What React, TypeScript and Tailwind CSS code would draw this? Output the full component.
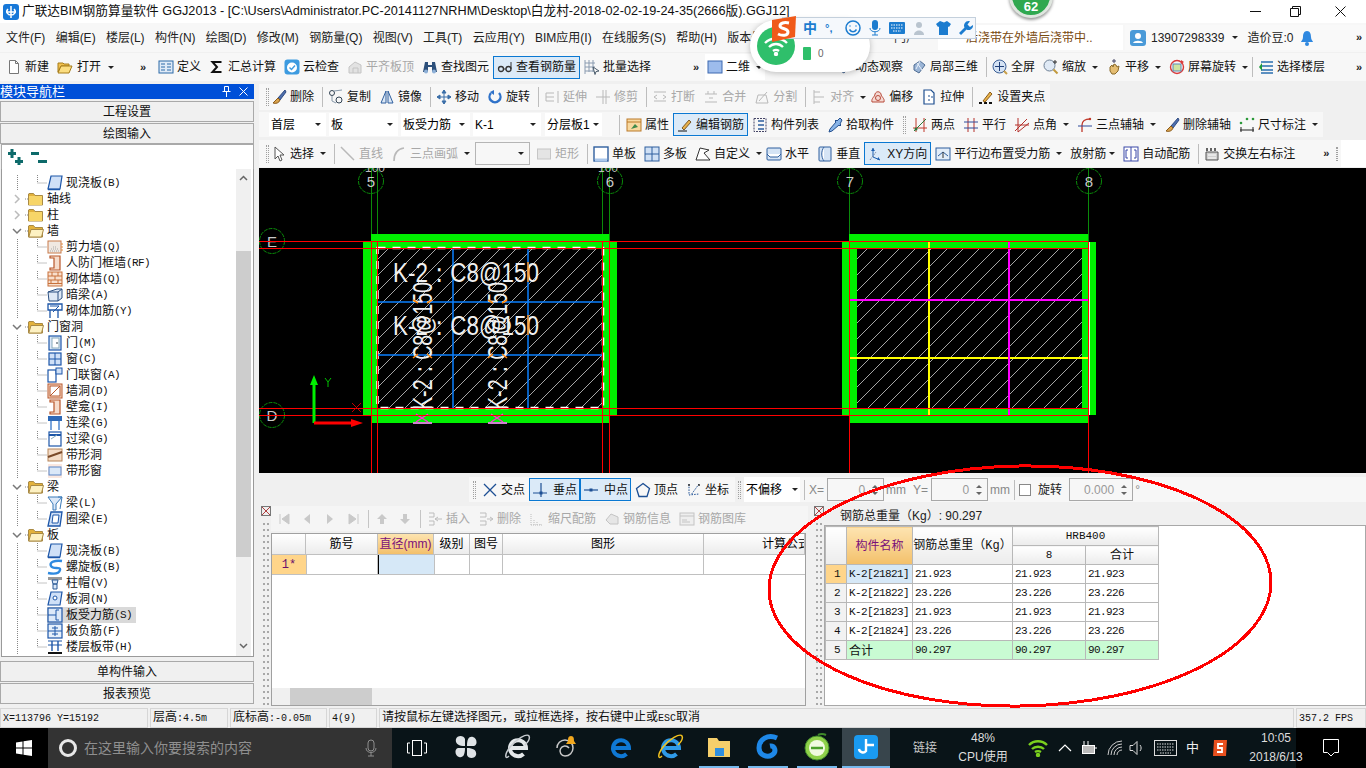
import type { ReactNode } from "react";
import { twMerge } from "tailwind-merge";

const MONO = "[font-family:'Liberation_Mono','Noto_Sans_CJK_SC',monospace]";

// 16x16 icon wrapper
function G({ children, size = 16 }: { children: ReactNode; size?: number }) {
  return (
    <svg width={size} height={size} viewBox="0 0 16 16" fill="none" className="shrink-0">
      {children}
    </svg>
  );
}

const I: Record<string, ReactNode> = {
  page: <G><path d="M3.5 1.5h6l3 3v10h-9z" fill="#fff" stroke="#777" /><path d="M9.5 1.5v3h3" stroke="#777" /></G>,
  open: <G><path d="M1 4h5l1 1h5v2H4L1 13z" fill="#f2c14e" stroke="#a67c1a" /><path d="M4 7h11l-3 7H1z" fill="#fbdd80" stroke="#a67c1a" /></G>,
  define: <G><rect x="1" y="2" width="14" height="12" fill="#dfeaf7" stroke="#2d6aa8" /><path d="M3 5h4M3 8h4M3 11h4M9 5h4M9 8h4M9 11h4" stroke="#2d6aa8" /></G>,
  sum: <G><path d="M12.5 3h-9l4.5 5-4.5 5h9" stroke="#111" strokeWidth="2" /></G>,
  cloud: <G><rect x="0.5" y="0.5" width="15" height="15" rx="3" fill="#3d9be0" /><circle cx="8" cy="8.5" r="5" fill="#fff" /><path d="M5.5 8.5l2 2 3.5-4" stroke="#3d9be0" strokeWidth="1.4" /></G>,
  level: <G><path d="M2 14V8l6-5 6 3v8z" fill="#e2e2e2" stroke="#c4c4c4" /><path d="M6 14V9h5v5" stroke="#c4c4c4" /></G>,
  bino: <G><path d="M3 3h3v3h4V3h3l2 10h-5V8H6v5H1z" fill="#2c4f7a" /><circle cx="4" cy="12.5" r="2" fill="#8fb1d8" /><circle cx="12" cy="12.5" r="2" fill="#8fb1d8" /></G>,
  glasses: <G><circle cx="4" cy="10" r="2.5" stroke="#333" strokeWidth="1.3" /><circle cx="11.5" cy="10" r="2.5" stroke="#333" strokeWidth="1.3" /><path d="M6.5 10h2.5M14 10V3" stroke="#333" /></G>,
  batch: <G><path d="M1 1v14M1 4h10M1 8h10M1 12h10M5 1v12M9 1v12" stroke="#8a9bb0" /><path d="M9 8l6 4-3 .5-1 3z" fill="#fff" stroke="#4a5a6a" /></G>,
  plan: <G><rect x="1" y="2" width="14" height="12" fill="#9dbcec" stroke="#3c68b0" /></G>,
  orbit: <G><path d="M3 6l6-4 5 4-6 8-5-3z" fill="#9bb5d6" stroke="#4e6c93" /><path d="M6 4l5 7M9 2L5 10" stroke="#e8f0fa" /></G>,
  fullscreen: <G><circle cx="7.5" cy="7.5" r="6.5" fill="#d4e2f4" stroke="#3b5f96" /><path d="M7.5 3v9M3 7.5h9" stroke="#1f3f78" /><path d="M12 12l3 3" stroke="#c9a04a" strokeWidth="2" /></G>,
  zoom: <G><circle cx="6.5" cy="6.5" r="5.5" fill="#dfe9f5" stroke="#6d7f94" /><path d="M10.5 10.5l4 4" stroke="#c29a3e" strokeWidth="2" /><path d="M12 1v4M10 3h4" stroke="#333" /></G>,
  hand: <G><path d="M4 8l2-2 1 2 1-3 2 1 1 2 2-1-1 5-3 3H6l-2-3z" fill="#e4bd72" stroke="#8a6a2a" /><path d="M8 0v4M6 2h4" stroke="#446" /></G>,
  rotate: <G><circle cx="8" cy="8" r="6.5" stroke="#d93a3a" strokeWidth="1.4" /><rect x="4" y="5" width="8" height="7" fill="#cfe3a0" stroke="#5b8ab8" /><path d="M12 1l3 2-3 2" fill="#d93a3a" /></G>,
  floors: <G><path d="M3 3h12M3 7h12M3 11h12M3 14h12" stroke="#2a6fb0" strokeWidth="1.6" /><path d="M1 8l3-4v8z" fill="#1e9a3c" /></G>,
  brush: <G><path d="M14 1L7 9l2 2 6-8z" fill="#4d6fae" stroke="#2f4a80" /><path d="M7 9l-5 5c3 1 6 0 7-3z" fill="#d9a34d" stroke="#8a5a1a" /></G>,
  copy: <G><circle cx="4" cy="4" r="2.5" stroke="#345" /><circle cx="11" cy="11" r="3" stroke="#345" /><path d="M6 2l8-1M4 7v5l4 2" stroke="#89a" /></G>,
  mirror: <G><path d="M7 2v12H2zM9 2v12h5z" fill="#dce8f6" stroke="#2f5f9e" /></G>,
  move: <G><path d="M8 1v14M1 8h14M8 1L6 4h4zM8 15l-2-3h4zM1 8l3-2v4zM15 8l-3-2v4z" fill="#3a6ea8" stroke="#3a6ea8" /></G>,
  spin: <G><path d="M12 4a5.5 5.5 0 1 1-8 0" stroke="#2f72c9" strokeWidth="2.4" /><path d="M7 1v5L3 3z" fill="#2f72c9" /></G>,
  off1: <G><path d="M14 2v12M10 4H2v8h8M2 8h8" stroke="#b9b9b9" /></G>,
  off2: <G><path d="M8 1v14M11 1v14M1 8h14" stroke="#b9b9b9" /></G>,
  off3: <G><path d="M2 3h12M2 12h12M5 6l-3 2 3 2M11 6l3 2-3 2" stroke="#b9b9b9" /></G>,
  off4: <G><path d="M2 5h12M2 13h12M5 2v3M11 2v3M6 9h4" stroke="#b9b9b9" /></G>,
  off5: <G><path d="M2 14h12L12 6H4z" stroke="#b9b9b9" /><path d="M5 12l8-9" stroke="#b9b9b9" /></G>,
  off6: <G><path d="M3 1v14M3 3h6M3 8h10M3 13h6" stroke="#b9b9b9" /></G>,
  offset: <G><path d="M2 13c-1-4 3-5 3-8 1-3 5-3 6 0 0 3 4 4 3 8z" fill="#f4d9d3" stroke="#b84a3a" /><circle cx="8" cy="9" r="2.5" stroke="#b84a3a" /></G>,
  stretch: <G><path d="M3 1h7l3 3v11H3z" fill="#fff" stroke="#1e4f8f" strokeWidth="1.2" /><path d="M8 6v2M8 10v2M10 8h2" stroke="#1e4f8f" /></G>,
  grip: <G><path d="M1 14h3M6 14h3M11 14h3" stroke="#111" strokeWidth="2" /><path d="M5 12l7-9 2 2-7 8z" fill="#eab54a" stroke="#8a5a1a" /></G>,
  attr: <G><rect x="1" y="2" width="14" height="12" fill="#f8d9a0" stroke="#bb7a2a" /><path d="M1 5h14" stroke="#bb7a2a" /><path d="M5 12l4-5 3 3z" fill="#3f8a4a" /></G>,
  pen: <G><path d="M1 14h9" stroke="#111" /><path d="M5 11l7-8 2 2-7 8z" fill="#e8b04a" stroke="#7a5a2a" /></G>,
  list: <G><path d="M2 1.5h12v13H2z" stroke="#446" strokeDasharray="2 1" /><path d="M6 4h6M6 8h6M6 12h6" stroke="#2f5f9e" strokeWidth="1.4" /></G>,
  pick: <G><path d="M15 3l-2-2-3 3-1-1-1 1 1 1-6 7-1 3 3-1 7-6 1 1 1-1-1-1z" fill="#8ab5e8" stroke="#24508f" /></G>,
  two: <G><path d="M4 1v14M12 1v14M1 11h14" stroke="#c0392b" /><path d="M2 14L14 2" stroke="#2c7a3a" /><circle cx="4" cy="12" r="1.5" fill="#2c7a3a" /></G>,
  para: <G><path d="M5 1v14M11 1v14" stroke="#b5302b" /><path d="M1 5h14M1 11h14" stroke="#2f4a9a" /></G>,
  angle: <G><path d="M4 1v14M1 8h14" stroke="#b5302b" /><path d="M1 14L13 2M4 15l11-9" stroke="#b5302b" /></G>,
  arc: <G><path d="M5 15V8c0-4 3-6 8-6" stroke="#c0392b" strokeWidth="1.3" /><path d="M1 9h14" stroke="#2f4a9a" /><circle cx="13" cy="2" r="1.2" fill="#c0392b" /></G>,
  dim: <G><path d="M1 13h14M2 10v5M14 10v5" stroke="#222" /><circle cx="2" cy="6" r="1.3" fill="#2c9a3a" /><circle cx="8" cy="2" r="1.3" fill="#2c9a3a" /><circle cx="14" cy="2" r="1.3" fill="#2c9a3a" /></G>,
  cursor: <G><path d="M4 1v12l3-3 2 5 2-1-2-5h4z" fill="#fff" stroke="#555" /></G>,
  line: <G><path d="M1 1l13 13" stroke="#b9b9b9" strokeWidth="1.5" /></G>,
  arc3: <G><path d="M3 15C3 8 6 3 13 2" stroke="#b9b9b9" strokeWidth="1.6" /></G>,
  rect: <G><rect x="1.5" y="3" width="13" height="10" fill="#e4e4e4" stroke="#c6c6c6" /></G>,
  single: <G><rect x="1" y="1" width="14" height="14" fill="#fff" stroke="#2f5f9e" strokeWidth="1.4" /><path d="M2 14h12" stroke="#a9c6ea" strokeWidth="3" /></G>,
  multi: <G><rect x="1" y="1" width="14" height="14" fill="#cfe0f5" stroke="#2f5f9e" /><path d="M8 1v14M1 8h14" stroke="#2f5f9e" /></G>,
  custom: <G><path d="M5 2l9 2-5 3 6 7H1z" fill="#fff" stroke="#333" /></G>,
  horiz: <G><rect x="1" y="2" width="14" height="12" rx="1" fill="#d5e4f5" stroke="#2f5f9e" /><path d="M1 8l3 3h8l3-3" fill="#fff" stroke="#2f5f9e" /></G>,
  vert: <G><rect x="2" y="1" width="12" height="14" rx="1" fill="#d5e4f5" stroke="#2f5f9e" /><path d="M7 1C4 5 4 11 7 15" fill="#fff" stroke="#2f5f9e" /></G>,
  xy: <G><path d="M5 2v9l7 3" stroke="#1d5fb0" /><path d="M2 14L8 6" stroke="#7a8aa0" strokeDasharray="2 1" /><path d="M5 2L3 5h4zM12 14l-3-.5 1.5-2.5z" fill="#1d5fb0" /></G>,
  pbar: <G><rect x="1" y="2" width="14" height="12" fill="#e3edf9" stroke="#2f5f9e" /><path d="M3 10l5-4 5 4" stroke="#2f5f9e" /><path d="M8 6v6" stroke="#333" /></G>,
  auto: <G><rect x="1" y="1" width="14" height="14" fill="#fff" stroke="#3a49a8" /><path d="M8 1v14M5 4h-2v8h2M11 4h2v8h-2" stroke="#3a49a8" /></G>,
  swap: <G><path d="M2 6h12v8H2z" fill="#cfcfcf" stroke="#555" /><path d="M3 2v3M7 2v3M11 2v3" stroke="#333" strokeWidth="1.5" /><path d="M4 9h8M4 12h8" stroke="#fff" /></G>,
  cross: <G><path d="M2 2l12 12M14 2L2 14" stroke="#1d4f94" strokeWidth="1.3" /></G>,
  perp: <G><path d="M1 11h14M9 1v14" stroke="#1d4f94" strokeWidth="1.2" /><rect x="7.5" y="9.5" width="3" height="3" fill="#1d4f94" /></G>,
  mid: <G><path d="M1 8h14" stroke="#1d4f94" strokeWidth="1.2" /><rect x="6.5" y="6.5" width="3" height="3" fill="#1d4f94" /></G>,
  vertex: <G><path d="M8 1.5l6.5 5-2.5 8H4l-2.5-8z" stroke="#1d4f94" strokeWidth="1.3" /></G>,
  coord: <G><path d="M3 2v11l10-1M13 2L5 13" stroke="#1d4f94" strokeDasharray="1.5 1.2" /><circle cx="3" cy="3" r="1" fill="#333" /><circle cx="13" cy="3" r="1" fill="#333" /></G>,
  first: <G><path d="M4 3v10M13 3L6 8l7 5z" fill="#c9c9c9" stroke="#c9c9c9" /></G>,
  prev: <G><path d="M11 3L5 8l6 5z" fill="#c9c9c9" /></G>,
  next: <G><path d="M5 3l6 5-6 5z" fill="#c9c9c9" /></G>,
  last: <G><path d="M12 3v10M3 3l7 5-7 5z" fill="#c9c9c9" stroke="#c9c9c9" /></G>,
  up: <G><path d="M8 3l5 5h-3v5H6V8H3z" fill="#c9c9c9" /></G>,
  down: <G><path d="M8 13l5-5h-3V3H6v5H3z" fill="#c9c9c9" /></G>,
  ins: <G><path d="M2 2h5v4H2M2 10h5v4H2M8 8h7M11 6l-3 2 3 2" stroke="#bdbdbd" /></G>,
  del: <G><path d="M2 2h6v4H2M2 10h6v4H2M9 8h5M12 6l3 2-3 2" stroke="#bdbdbd" /></G>,
  scale: <G><path d="M2 14h12M2 14V2M5 14V8M8 14v-4M11 14v-2" stroke="#bdbdbd" strokeDasharray="1 1" /></G>,
  info: <G><path d="M2 9l5-6 7 3v7H6z" fill="#e6e6e6" stroke="#c4c4c4" /></G>,
  lib: <G><rect x="1" y="2" width="14" height="12" fill="#eee" stroke="#c4c4c4" /><path d="M1 5h14M3 9h5M3 11h8" stroke="#c4c4c4" /></G>,
};

function Tool({ icon, label, caret, off, on, className = "" }: { icon?: string; label: string; caret?: boolean; off?: boolean; on?: boolean; className?: string }) {
  const base = on
    ? "h-[23px] border border-[#0a78d2] bg-[#dbeaf8] px-[3px]"
    : "h-full px-[4px]";
  return (
    <div className={twMerge("flex shrink-0 items-center gap-[3px] whitespace-nowrap", off ? "text-[#a8a8a8]" : "text-[#111]", base, className)}>
      {icon && I[icon]}
      <span>{label}</span>
      {caret && <Caret />}
    </div>
  );
}

function Caret() {
  return <span className="ml-[3px] h-0 w-0 border-x-[3px] border-t-[3px] border-x-transparent border-t-[#222]" />;
}

function Sep() {
  return <span className="mr-[1px] ml-[4px] h-[20px] w-px shrink-0 bg-[#bdbdbd]" />;
}

function Grip() {
  return <span className="mx-[3px] h-[18px] w-[3px] shrink-0 border-x border-dotted border-[#a0a0a0]" />;
}

function More({ className = "" }: { className?: string }) {
  return <span className={`shrink-0 text-[11px] leading-none font-bold text-[#222] ${className}`}>»</span>;
}

function Drop({ label, className }: { label: string; className: string }) {
  return (
    <div className={`flex h-[23px] shrink-0 items-center justify-between bg-white pr-[5px] pl-[2px] text-[12px] ${className}`}>
      <span className="whitespace-nowrap">{label}</span>
      <Caret />
    </div>
  );
}

function TitleBar() {
  return (
    <div className="flex h-[23px] shrink-0 items-center bg-white text-[12.7px] text-[#111]">
      <svg width="16" height="16" viewBox="0 0 16 16" className="mx-[3px] shrink-0">
        <rect width="16" height="16" rx="3" fill="#1778d8" />
        <path d="M8 2v12M3 8h10M5 5c-3 3 0 6 3 6M11 5c3 3 0 6-3 6" stroke="#fff" strokeWidth="1.5" fill="none" />
      </svg>
      <span className="whitespace-nowrap">广联达BIM钢筋算量软件 GGJ2013 - [C:\Users\Administrator.PC-20141127NRHM\Desktop\白龙村-2018-02-02-19-24-35(2666版).GGJ12]</span>
      <div className="ml-auto flex items-center">
        <span className="h-px w-[11px] bg-[#111]" />
        <svg width="11" height="11" viewBox="0 0 11 11" className="ml-[29px]" fill="none" stroke="#111"><path d="M.5 2.5h8v8h-8zM2.5 2.5v-2h8v8h-2" /></svg>
        <svg width="11" height="11" viewBox="0 0 11 11" className="mr-[20px] ml-[34px]" fill="none" stroke="#111"><path d="M.5.5l10 10M10.5.5l-10 10" /></svg>
      </div>
    </div>
  );
}

const MENU = ["文件(F)", "编辑(E)", "楼层(L)", "构件(N)", "绘图(D)", "修改(M)", "钢筋量(Q)", "视图(V)", "工具(T)", "云应用(Y)", "BIM应用(I)", "在线服务(S)", "帮助(H)", "版本号"];

function MenuBar() {
  return (
    <div className="flex h-[29px] shrink-0 items-center bg-[#f7f7f7] pl-[6px] text-[#222]">
      <div className="flex w-[880px] shrink-0 gap-[10.3px] whitespace-nowrap">
        {MENU.map((m) => <span key={m}>{m}</span>)}
      </div>
      <span className="ml-[8px] w-[44px] shrink-0 text-[#333]">门户</span>
      <div className="flex h-[25px] w-[185px] shrink-0 items-center bg-white pl-[28px] whitespace-nowrap text-[#7a4a10]">后浇带在外墙后浇带中..</div>
      <div className="ml-[2px] flex h-[25px] flex-1 items-center bg-[#f9f9f9] pl-[5px] whitespace-nowrap">
        <svg width="16" height="16" viewBox="0 0 16 16" className="shrink-0"><rect width="16" height="16" rx="3" fill="#4a9ad8" /><circle cx="8" cy="6" r="3" fill="#fff" /><path d="M3 13c1-3 9-3 10 0z" fill="#fff" /></svg>
        <span className="ml-[5px]">13907298339</span>
        <span className="ml-[5px] flex items-center"><Caret /></span>
        <span className="ml-[9px]">造价豆:0</span>
        <svg width="14" height="16" viewBox="0 0 14 16" className="ml-[7px] shrink-0"><path d="M7 1c3 0 4 3 4 6 0 3 2 4 2 5H1c0-1 2-2 2-5 0-3 1-6 4-6z" fill="#2f88e0" /><circle cx="7" cy="14" r="2" fill="#2f88e0" /></svg>
        <More className="mr-[4px] ml-auto" />
      </div>
    </div>
  );
}

function Toolbar1() {
  return (
    <div className="flex h-[30px] shrink-0 items-center bg-[#f0f0f0] text-[12px]">
      <div className="flex h-[28px] w-[152px] shrink-0 items-center bg-[#f7f7f7] pl-[2px]">
        <Tool icon="page" label="新建" />
        <Tool icon="open" label="打开" caret className="gap-[4px]" />
        <More className="mr-[6px] ml-auto" />
      </div>
      <div className="flex h-[28px] w-[549px] shrink-0 items-center bg-[#f7f7f7] pl-[2px]">
        <Tool icon="define" label="定义" />
        <Tool icon="sum" label="汇总计算" />
        <Tool icon="cloud" label="云检查" />
        <Tool icon="level" label="平齐板顶" off />
        <Tool icon="bino" label="查找图元" />
        <Tool icon="glasses" label="查看钢筋量" on />
        <Tool icon="batch" label="批量选择" />
        <More className="mr-[2px] ml-auto" />
      </div>
      <div className="flex h-[28px] flex-1 items-center bg-[#f7f7f7] pl-[4px]">
        <div className="flex h-[26px] w-[60px] shrink-0 items-center bg-white">
          <Tool icon="plan" label="二维" caret className="px-[2px]" />
        </div>
        <div className="w-[67px] shrink-0" />
        <Tool icon="orbit" label="动态观察" />
        <Tool icon="orbit" label="局部三维" />
        <Sep />
        <Tool icon="fullscreen" label="全屏" />
        <Tool icon="zoom" label="缩放" caret />
        <Tool icon="hand" label="平移" caret />
        <Tool icon="rotate" label="屏幕旋转" caret className="pr-0" />
        <Sep />
        <Tool icon="floors" label="选择楼层" />
        <More className="mr-[4px] ml-auto" />
      </div>
    </div>
  );
}

type Leaf = { kind: "folder" | "open" | "item"; name: string; code?: string; icon?: string; sel?: boolean };

const TREE: Leaf[] = [
  { kind: "item", name: "现浇板", code: "(B)", icon: "slab" },
  { kind: "folder", name: "轴线" },
  { kind: "folder", name: "柱" },
  { kind: "open", name: "墙" },
  { kind: "item", name: "剪力墙", code: "(Q)", icon: "shear" },
  { kind: "item", name: "人防门框墙", code: "(RF)", icon: "jamb" },
  { kind: "item", name: "砌体墙", code: "(Q)", icon: "brick" },
  { kind: "item", name: "暗梁", code: "(A)", icon: "beam" },
  { kind: "item", name: "砌体加筋", code: "(Y)", icon: "tie" },
  { kind: "open", name: "门窗洞" },
  { kind: "item", name: "门", code: "(M)", icon: "door" },
  { kind: "item", name: "窗", code: "(C)", icon: "window" },
  { kind: "item", name: "门联窗", code: "(A)", icon: "doorwin" },
  { kind: "item", name: "墙洞", code: "(D)", icon: "hole" },
  { kind: "item", name: "壁龛", code: "(I)", icon: "jamb" },
  { kind: "item", name: "连梁", code: "(G)", icon: "link" },
  { kind: "item", name: "过梁", code: "(G)", icon: "lintel" },
  { kind: "item", name: "带形洞", icon: "strip" },
  { kind: "item", name: "带形窗", icon: "stripwin" },
  { kind: "open", name: "梁" },
  { kind: "item", name: "梁", code: "(L)", icon: "girder" },
  { kind: "item", name: "圈梁", code: "(E)", icon: "ring" },
  { kind: "open", name: "板" },
  { kind: "item", name: "现浇板", code: "(B)", icon: "slab" },
  { kind: "item", name: "螺旋板", code: "(B)", icon: "spiral" },
  { kind: "item", name: "柱帽", code: "(V)", icon: "cap" },
  { kind: "item", name: "板洞", code: "(N)", icon: "slabhole" },
  { kind: "item", name: "板受力筋", code: "(S)", icon: "rebar", sel: true },
  { kind: "item", name: "板负筋", code: "(F)", icon: "neg" },
  { kind: "item", name: "楼层板带", code: "(H)", icon: "band" },
];

const TI: Record<string, ReactNode> = {
  slab: <G><path d="M4 1h11l-2 13H1z" fill="#cfe0f7" stroke="#1d56a8" strokeWidth="1.2" /><path d="M1 14.500h12" stroke="#1d56a8" strokeWidth="1.5" /></G>,
  shear: <G><rect x="1" y="2" width="13" height="12" fill="#f0e8e2" stroke="#c87a4a" /><path d="M3 12h9M4 10h7M6 8h4" stroke="#aaa" strokeDasharray="1 1" /><path d="M14 5h2M14 8h2M14 11h2" stroke="#e08a3a" /></G>,
  jamb: <G><path d="M3 1h10v14H3v-2h4V3H3z" fill="#f6dccb" stroke="#b8562a" strokeWidth="1.2" /></G>,
  brick: <G><rect x="1" y="1" width="14" height="14" fill="#f8dfcd" stroke="#c8703a" /><path d="M1 5h14M1 9h14M1 12.500h14M5 1v4M11 1v4M8 5v4M4 9v4M11 9v4" stroke="#c8703a" /></G>,
  beam: <G><path d="M1 5l9-3h5v9l-4 3H2z" fill="#dfe9f5" stroke="#2b4f80" /><path d="M1 5h10v9M11 5l4-3" stroke="#2b4f80" /></G>,
  tie: <G><path d="M1 1h14v6H1zM3 7v8M11 7v8" stroke="#1d56a8" strokeWidth="1.3" /><path d="M3 3h9l-6 6" stroke="#1d56a8" /></G>,
  door: <G><rect x="2" y="1" width="12" height="14" fill="#dbe8f8" stroke="#1d56a8" strokeWidth="1.2" /><rect x="5" y="3" width="7" height="10" fill="#fff" stroke="#8ab" /><circle cx="10" cy="8" r="0.8" fill="#123" /></G>,
  window: <G><rect x="2" y="2" width="12" height="12" fill="#cfe0f7" stroke="#1d56a8" strokeWidth="1.2" /><path d="M8 2v12M2 8h12" stroke="#1d56a8" /></G>,
  doorwin: <G><rect x="1" y="3" width="8" height="12" fill="#fff" stroke="#1d56a8" strokeWidth="1.2" /><rect x="9" y="1" width="6" height="6" fill="#cfe0f7" stroke="#1d56a8" /></G>,
  hole: <G><rect x="1" y="1" width="14" height="14" fill="#f8dfcd" stroke="#b8562a" /><rect x="3" y="3" width="10" height="10" fill="#fff" stroke="#b8562a" /><path d="M3 13L13 3" stroke="#b8562a" /></G>,
  link: <G><rect x="1" y="1" width="14" height="5" fill="#2f6ab8" /><path d="M4 6v9M12 6v9" stroke="#7aa5dc" strokeWidth="2" /></G>,
  lintel: <G><rect x="2" y="1" width="12" height="14" fill="#fff" stroke="#1d56a8" strokeWidth="1.2" /><path d="M2 4h12" stroke="#1d56a8" strokeWidth="2" /><path d="M4 8l6-4" stroke="#8ab" /></G>,
  strip: <G><rect x="1" y="2" width="14" height="12" fill="#f3dcc8" stroke="#b8865a" /><path d="M1 10l14-5" stroke="#7a4a2a" strokeWidth="2" /></G>,
  stripwin: <G><path d="M1 1h14v14H1z" fill="#fbe8e0" /><rect x="2" y="4" width="12" height="8" fill="#dbe8f8" stroke="#5b86c8" /></G>,
  girder: <G><path d="M1 2h14L9 9v6H6V9z" fill="#dbe8f8" stroke="#3a7ab8" /><path d="M11 2l4 0-2 12" stroke="#3a7ab8" /></G>,
  ring: <G><path d="M4 1h11l-2 14H1z" fill="#cfe0f7" stroke="#1d56a8" strokeWidth="1.3" /><path d="M6 4h6l-1 8H5z" fill="#fff" stroke="#1d56a8" /></G>,
  spiral: <G size={16}><path d="M15 2C8 1 2 3 4 7s10 0 9 4-7 4-12 3" stroke="#2f8ae0" strokeWidth="2.4" /></G>,
  cap: <G><path d="M1 2h14v3H1z" fill="#999" /><path d="M5 5h6l-1 4H6zM6 9h4v5H6z" fill="#dbe8f8" stroke="#2b5a96" /></G>,
  slabhole: <G><path d="M4 1h11l-2 13H1z" fill="#cfe0f7" stroke="#1d56a8" strokeWidth="1.2" /><circle cx="8" cy="7" r="2" fill="#fff" stroke="#1d56a8" /></G>,
  rebar: <G><rect x="1" y="1" width="14" height="14" fill="#dbe8f8" stroke="#1d56a8" strokeWidth="1.2" /><path d="M1 8h8M9 3v10M9 3h3M9 13h3" stroke="#1d56a8" /></G>,
  neg: <G><rect x="1" y="1" width="14" height="14" fill="#e6f0fb" stroke="#1d56a8" strokeWidth="1.2" /><path d="M1 8h14M8 3v10M5 5h6M5 11h6" stroke="#1d56a8" /></G>,
  band: <G><path d="M1 2h14M1 6h14" stroke="#1d56a8" /><path d="M5 2v10M11 2v10" stroke="#1d56a8" strokeWidth="1.4" /><path d="M1 14h14" stroke="#111" strokeWidth="2" /></G>,
};

function Folder({ open }: { open: boolean }) {
  return (
    <svg width="16" height="14" viewBox="0 0 16 14" className="shrink-0">
      <path d="M.5 2V13h14V3.500H7L5.500 1.500H1z" fill="#e3b23c" stroke="#a98a45" />
      {open ? <path d="M3 5.500h12.500L13.500 13H.8z" fill="#fdf1c2" stroke="#a98a45" /> : <rect x="1" y="4" width="13" height="9" fill="#f7d568" />}
    </svg>
  );
}

function TreeRow({ leaf }: { leaf: Leaf }) {
  const isItem = leaf.kind === "item";
  return (
    <div className="flex h-[16px] shrink-0 items-center">
      {isItem ? (
        <svg width="43" height="16" className="ml-[2px] shrink-0">
          <path d="M13.500 0v16M33.500 0v8M33.500 8h9" stroke="#888" strokeDasharray="1 1" fill="none" />
        </svg>
      ) : (
        <svg width="24" height="16" className="ml-[2px] shrink-0" fill="none">
          {leaf.kind === "open" ? <path d="M9 6l4 4 4-4" stroke="#777" strokeWidth="1.5" /> : <path d="M11 4l4 4-4 4" stroke="#bbb" strokeWidth="1.5" />}
          <path d="M21 8h3" stroke="#888" strokeDasharray="1 1" />
        </svg>
      )}
      <div className={`flex h-[16px] items-center pr-[4px] text-[12px] whitespace-nowrap text-[#111] ${leaf.sel ? "bg-[#d9d9d9]" : ""}`}>
        {isItem ? TI[leaf.icon!] : <Folder open={leaf.kind === "open"} />}
        <span className="ml-[3px]">{leaf.name}</span>
        {leaf.code && <span className={`${MONO} text-[11px] tracking-[-0.6px]`}>{leaf.code}</span>}
      </div>
    </div>
  );
}

function NavButton({ label }: { label: string }) {
  return <div className="flex h-[21px] shrink-0 items-center justify-center border border-[#a9a9a9] bg-[#f0f0f0] text-[12px] text-[#111]">{label}</div>;
}

function LeftPanel() {
  return (
    <div className="flex w-[254px] shrink-0 flex-col pt-[2px]">
      <div className="flex h-[15px] shrink-0 items-center bg-[#0050d8] text-[13px] leading-none text-white">
        <span>模块导航栏</span>
        <span className="mr-[6px] ml-auto flex items-center gap-[8px]">
          <svg width="9" height="11" viewBox="0 0 9 11" fill="none" stroke="#fff"><path d="M2.500.5h4v5h-4zM.5 5.500h8M4.500 6v5" /></svg>
          <svg width="9" height="9" viewBox="0 0 9 9" fill="none" stroke="#fff"><path d="M.5.5l8 8M8.500.5l-8 8" /></svg>
        </span>
      </div>
      <div className="mt-[2px] flex flex-col gap-px"><NavButton label="工程设置" /><NavButton label="绘图输入" /></div>
      <div className="ml-[1px] flex h-[25px] shrink-0 items-center gap-[8px] border-x border-t border-[#a9a9a9] bg-white pl-[6px]">
        <svg width="15" height="16" viewBox="0 0 15 16" fill="#0d6a6a"><path d="M0 3h8v3H0zM2.500 0h3v9h-3zM7 11h8v3H7zM9.500 8h3v8h-3z" /></svg>
        <svg width="16" height="16" viewBox="0 0 16 16" fill="#0d6a6a"><path d="M0 3h8v3H0zM7 11h9v3H7z" /></svg>
      </div>
      <div className="ml-[1px] flex h-[488px] shrink-0 overflow-hidden border-x border-b border-[#9a9a9a] bg-white">
        <div className="flex min-w-0 flex-1 flex-col overflow-hidden pt-[6px]">
          {TREE.map((leaf, i) => <TreeRow key={i} leaf={leaf} />)}
          <div className="flex h-[16px] shrink-0 items-center pl-[26px]"><Folder open={false} /><span className="ml-[3px]">基础</span></div>
        </div>
        <div className="mr-[2px] flex w-[15px] shrink-0 flex-col bg-[#f0f0f0]">
          <span className="flex h-[17px] shrink-0 items-center justify-center"><svg width="9" height="6" viewBox="0 0 9 6" fill="none" stroke="#666" strokeWidth="1.5"><path d="M1 5l3.500-3.500L8 5" /></svg></span>
          <span className="mt-[65px] h-[306px] shrink-0 bg-[#cdcdcd]" />
          <span className="mt-auto mb-[2px] flex h-[17px] shrink-0 items-center justify-center"><svg width="9" height="6" viewBox="0 0 9 6" fill="none" stroke="#666" strokeWidth="1.5"><path d="M1 1l3.500 3.500L8 1" /></svg></span>
        </div>
      </div>
      <div className="mt-[4px] flex flex-col gap-px"><NavButton label="单构件输入" /><NavButton label="报表预览" /></div>
    </div>
  );
}

function Row2() {
  return (
    <div className="flex h-[26px] w-[791px] shrink-0 items-center bg-[#f7f7f7] pl-[4px]">
      <Grip />
      <Tool icon="brush" label="删除" className="-ml-[5px]" />
      <Sep />
      <Tool icon="copy" label="复制" />
      <Tool icon="mirror" label="镜像" />
      <Sep />
      <Tool icon="move" label="移动" />
      <Tool icon="spin" label="旋转" />
      <Sep />
      <Tool icon="off1" label="延伸" off />
      <Tool icon="off2" label="修剪" off />
      <Sep />
      <Tool icon="off3" label="打断" off />
      <Tool icon="off4" label="合并" off />
      <Tool icon="off5" label="分割" off />
      <Sep />
      <Tool icon="off6" label="对齐" off caret className="pr-0" />
      <Tool icon="offset" label="偏移" />
      <Tool icon="stretch" label="拉伸" />
      <Sep />
      <Tool icon="grip" label="设置夹点" />
    </div>
  );
}

function Row3() {
  return (
    <div className="mt-[2px] flex h-[25px] shrink-0 items-center">
      <div className="flex h-full w-[641px] shrink-0 items-center bg-[#f7f7f7] pl-[10px]">
        <Drop label="首层" className="w-[57px]" />
        <Drop label="板" className="ml-[3px] w-[69px]" />
        <Drop label="板受力筋" className="ml-[3px] w-[69px]" />
        <Drop label="K-1" className="ml-[3px] w-[68px]" />
        <Drop label="分层板1" className="ml-[4px] w-[57px]" />
        <span className="mr-[2px] ml-[17px] h-[20px] w-px shrink-0 bg-[#bdbdbd]" />
        <Tool icon="attr" label="属性" />
        <Tool icon="pen" label="编辑钢筋" on />
        <Tool icon="list" label="构件列表" />
        <Tool icon="pick" label="拾取构件" />
      </div>
      <div className="flex h-full w-[423px] shrink-0 items-center bg-[#f7f7f7]">
        <Grip />
        <Tool icon="two" label="两点" className="-ml-[1px]" />
        <Tool icon="para" label="平行" />
        <Tool icon="angle" label="点角" caret />
        <Tool icon="arc" label="三点辅轴" caret />
        <Tool icon="brush" label="删除辅轴" />
        <Tool icon="dim" label="尺寸标注" caret />
      </div>
    </div>
  );
}

function Row4() {
  return (
    <div className="mt-[3px] mb-[1px] flex h-[27px] shrink-0 items-center bg-[#f7f7f7] pl-[4px]">
      <Grip />
      <Tool icon="cursor" label="选择" caret className="-ml-[5px]" />
      <Sep />
      <Tool icon="line" label="直线" off />
      <Tool icon="arc3" label="三点画弧" off caret />
      <div className="ml-[1px] flex h-[23px] w-[55px] shrink-0 items-center justify-end border border-[#b5b5b5] pr-[5px]"><Caret /></div>
      <Tool icon="rect" label="矩形" off className="ml-[2px]" />
      <Sep />
      <Tool icon="single" label="单板" />
      <Tool icon="multi" label="多板" />
      <Tool icon="custom" label="自定义" caret className="pr-0" />
      <Tool icon="horiz" label="水平" />
      <Tool icon="vert" label="垂直" />
      <Tool icon="xy" label="XY方向" on />
      <Tool icon="pbar" label="平行边布置受力筋" caret />
      <Tool label="放射筋" caret className="gap-0" />
      <Tool icon="auto" label="自动配筋" />
      <Sep />
      <Tool icon="swap" label="交换左右标注" />
      <More className="ml-[24px]" />
      <span className="ml-[4px]"><Grip /></span>
      <span className="h-full flex-1 bg-white" />
    </div>
  );
}

const HATCH_X = Array.from({ length: 26 }, (_, i) => i);

function Hatch({ x, w }: { x: number; w: number }) {
  // diagonal fill clipped to the slab
  const id = `clip${x}`;
  return (
    <g>
      <clipPath id={id}><rect x={x} y={249} width={w} height={159} /></clipPath>
      <g clipPath={`url(#${id})`} stroke="#cfcfcf" strokeWidth="0.8">
        {HATCH_X.map((i) => <line key={i} x1={x - 165 + i * 16} y1={408} x2={x + 5 + i * 16} y2={238} />)}
      </g>
    </g>
  );
}

function Axis({ cx, cy, label }: { cx: number; cy: number; label: string }) {
  return (
    <g>
      <circle cx={cx} cy={cy} r={12.5} fill="none" stroke="#0a8a0a" strokeDasharray="4 1" />
      <text x={cx} y={cy + 5.500} textAnchor="middle" fontSize="15" fill="#c8c8c8" fontFamily="Liberation Sans">{label}</text>
    </g>
  );
}

function Canvas() {
  const cadText = "K-2：C8@150";
  return (
    <div className="h-[305px] shrink-0 bg-black">
      <svg width="1107" height="305" viewBox="259 168 1107 305" className="block">
        {/* axis stubs */}
        <path d="M371.500 168v74M377.500 168v74M602.500 168v74M609.500 168v74M849.500 168v74M1088.500 168v74" stroke="#0a8a0a" fill="none" shapeRendering="crispEdges" />
        <Axis cx={371} cy={181} label="5" />
        <Axis cx={610} cy={181} label="6" />
        <Axis cx={850} cy={181} label="7" />
        <Axis cx={1089} cy={181} label="8" />
        <Axis cx={272} cy={241} label="E" />
        <Axis cx={272} cy={415} label="D" />
        <text x={365} y={172} fontSize="12" fill="#bbb" fontFamily="Liberation Sans">100</text>
        <text x={598} y={172} fontSize="12" fill="#bbb" fontFamily="Liberation Sans">100</text>

        {/* left slab */}
        <path fillRule="evenodd" d="M371 234h238v8h8v173h-8v8H371v-8h-8V242h8zM378 249v159h225V249z" fill="#00f000" />
        <Hatch x={378} w={225} />
        <rect x={377.500} y={248} width={225.500} height={160} fill="none" stroke="#fff" strokeWidth="2.500" strokeDasharray="8 7" />
        <g stroke="#0a80ff" strokeWidth="1.500">
          <path d="M453 249v159M528 249v159M378 302h225M378 355h225" />
        </g>
        <g fill="#f0f0f0" fontFamily="Liberation Sans" fontSize="27">
          <text x={393} y={282} textLength={146} lengthAdjust="spacingAndGlyphs">{cadText}</text>
          <text x={393} y={335} textLength={146} lengthAdjust="spacingAndGlyphs">{cadText}</text>
          <text transform="translate(432 410) rotate(-90)" textLength={128} lengthAdjust="spacingAndGlyphs">{cadText}</text>
          <text transform="translate(507 410) rotate(-90)" textLength={128} lengthAdjust="spacingAndGlyphs">{cadText}</text>
        </g>
        <path d="M528 262v20M528 315v20M413 300l5 3M427 303l5-3M488 300l5 3M502 303l5-3M413 358l5-4M427 354l5 4M488 358l5-4M502 354l5 4" stroke="#ff8a10" strokeWidth="1.500" fill="none" />
        <path d="M416 414l12 8M428 414l-12 8M491 414l12 8M503 414l-12 8" stroke="#ff30d0" strokeWidth="1.500" />
        <path d="M413 423h19M488 423h19" stroke="#d080d0" strokeWidth="2" />

        {/* right slab */}
        <path fillRule="evenodd" d="M849 234h239v8h8v173h-8v8H849v-8h-7V242h7zM857 249v159h225V249z" fill="#00f000" />
        <rect x={1088} y={242} width={2} height={173} fill="#e8ffe8" />
        <Hatch x={857} w={225} />
        <path d="M929 242v173M850 358h238" stroke="#ffff00" strokeWidth="2" />
        <path d="M1009 242v173M849 300h240" stroke="#ff00ff" strokeWidth="2" />

        {/* red grid */}
        <path d="M259 241.500h829M259 248.500h829M259 408.500h829M259 415.500h829M371.500 242v231M377.500 242v231M602.500 242v231M609.500 242v231M849.500 242v231M1088.500 242v231" stroke="#ff0000" fill="none" shapeRendering="crispEdges" />

        {/* ucs */}
        <path d="M314 423v-40" stroke="#00f000" strokeWidth="3" />
        <path d="M314 375l-4 10h8z" fill="#00f000" />
        <path d="M325 378l3 4 3-4M328 382v5" stroke="#00c000" fill="none" />
        <path d="M314 423h38" stroke="#ff0000" strokeWidth="3" />
        <path d="M363 423l-12-4v8z" fill="#ff0000" />
        <path d="M352 403l9 9M361 403l-9 9" stroke="#c00000" />
      </svg>
    </div>
  );
}

function NumBox({ value, className }: { value: string; className: string }) {
  return (
    <div className={`flex h-[23px] shrink-0 items-center justify-end border border-[#a8a8a8] pr-[5px] text-[#999] ${className}`}>
      <span>{value}</span>
      <span className="ml-[7px] flex flex-col gap-[4px]">
        <span className="h-0 w-0 border-x-[3px] border-b-[3px] border-x-transparent border-b-[#666]" />
        <span className="h-0 w-0 border-x-[3px] border-t-[3px] border-x-transparent border-t-[#666]" />
      </span>
    </div>
  );
}

function SnapBar() {
  return (
    <div className="flex h-[30px] shrink-0 items-center pt-[3px] pl-[210px]">
      <div className="flex h-[25px] shrink-0 items-center bg-[#f7f7f7] pr-[2px] pl-[1px]">
        <Grip />
        <Tool icon="cross" label="交点" className="-ml-[1px]" />
        <Tool icon="perp" label="垂点" on className="gap-[5px] px-[2px]" />
        <Tool icon="mid" label="中点" on className="gap-[5px] px-[2px]" />
        <Tool icon="vertex" label="顶点" />
        <Tool icon="coord" label="坐标" />
      </div>
      <Grip />
      <div className="flex h-[25px] w-[56px] shrink-0 items-center justify-between bg-white pr-[2px] pl-[2px]"><span>不偏移</span><Caret /></div>
      <div className="flex h-[25px] flex-1 items-center bg-[#f7f7f7] whitespace-nowrap text-[#888]">
        <span className="mx-[4px] h-[20px] w-px bg-[#bdbdbd]" />
        <span>X=</span>
        <NumBox value="0" className="ml-[3px] w-[57px]" />
        <span className="ml-[2px]">mm</span>
        <span className="ml-[7px]">Y=</span>
        <NumBox value="0" className="ml-[3px] w-[57px]" />
        <span className="ml-[2px]">mm</span>
        <span className="mx-[4px] h-[20px] w-px bg-[#bdbdbd]" />
        <span className="h-[12px] w-[12px] border border-[#888] bg-white" />
        <span className="ml-[7px] text-[#222]">旋转</span>
        <NumBox value="0.000" className="ml-[7px] w-[64px]" />
        <span className="ml-[2px]">°</span>
      </div>
    </div>
  );
}

function Pin() {
  return (
    <svg width="10" height="10" viewBox="0 0 10 10" className="shrink-0"><rect x=".5" y=".5" width="9" height="9" fill="#eee" stroke="#777" /><path d="M1 1l8 8M9 1L1 9" stroke="#b04040" /></svg>
  );
}

function Strip() {
  return (
    <div className="flex w-[11px] shrink-0 flex-col items-center gap-[5px]">
      <Pin />
      <span className="w-[7px] flex-1 bg-[radial-gradient(#a8a8a8_1px,transparent_1px)] bg-[length:4px_6px]" />
    </div>
  );
}

const HEAD_L = [
  { t: "", w: "w-[34px]" },
  { t: "筋号", w: "w-[72px] justify-center" },
  { t: "直径(mm)", w: "w-[56px] justify-center", on: true },
  { t: "级别", w: "w-[36px] justify-center" },
  { t: "图号", w: "w-[33px] justify-center" },
  { t: "图形", w: "w-[201px] justify-center" },
  { t: "计算公式", w: "flex-1 pl-[58px]" },
];

function RebarPanel() {
  return (
    <div className="flex w-[549px] shrink-0 pt-[3px] pb-[2px] pl-[1px]">
      <Strip />
      <div className="flex min-w-0 flex-1 flex-col">
        <div className="flex h-[25px] shrink-0 items-center bg-[#f5f5f5] pl-[5px] text-[#a0a0a0]">
          <span>{I.first}</span>
          <span className="ml-[7px]">{I.prev}</span>
          <span className="ml-[7px]">{I.next}</span>
          <span className="ml-[8px]">{I.last}</span>
          <span className="mr-[5px] ml-[6px] h-[18px] w-px bg-[#c5c5c5]" />
          <span>{I.up}</span>
          <span className="ml-[7px]">{I.down}</span>
          <span className="mr-[2px] ml-[7px] h-[18px] w-px bg-[#c5c5c5]" />
          <Tool icon="ins" label="插入" off />
          <Tool icon="del" label="删除" off />
          <Tool icon="scale" label="缩尺配筋" off />
          <Tool icon="info" label="钢筋信息" off />
          <Tool icon="lib" label="钢筋图库" off />
        </div>
        <div className="mt-[2px] mr-[2px] flex min-h-0 flex-1 flex-col border border-[#a0a0a0] bg-white">
          <div className="flex h-[21px] shrink-0 border-b border-[#c0c0c0]">
            {HEAD_L.map((h) => (
              <div key={h.t} className={`flex items-center overflow-hidden border-r border-[#c0c0c0] whitespace-nowrap ${h.w} ${h.on ? "bg-gradient-to-b from-[#fde4b0] to-[#f3c06a] text-[#7a0f7a]" : "bg-gradient-to-b from-white to-[#ececec]"}`}>{h.t}</div>
            ))}
          </div>
          <div className="flex h-[20px] shrink-0 border-b border-[#c0c0c0]">
            <div className={`flex w-[34px] items-center justify-center bg-[#ffd58a] text-[#6a0f6a] ${MONO}`}>1*</div>
            <div className="w-[72px] border-x border-[#c0c0c0]" />
            <div className="w-[56px] border-l border-l-black bg-[#d6e8f7]" />
            <div className="w-[36px] border-x border-[#c0c0c0]" />
            <div className="w-[33px] border-r border-[#c0c0c0]" />
            <div className="w-[201px] border-r border-[#c0c0c0]" />
          </div>
          <div className="flex-1" />
          <div className="flex h-[17px] shrink-0 bg-[#f0f0f0] pl-[18px]"><span className="w-[82px] bg-[#cdcdcd]" /></div>
        </div>
      </div>
    </div>
  );
}

const ROWS = [
  ["K-2[21821]", "21.923"],
  ["K-2[21822]", "23.226"],
  ["K-2[21823]", "21.923"],
  ["K-2[21824]", "23.226"],
];

const TD = `border border-[#b8b8b8] h-[19px] p-0 pl-[2px] ${MONO} text-[11px] tracking-[-0.6px] text-[#111]`;
const TH = "border border-[#b8b8b8] bg-gradient-to-b from-white to-[#ececec] p-0 font-normal text-[#111]";

function SumPanel() {
  return (
    <div className="flex flex-1 pt-[3px] pb-[2px] pl-[5px]">
      <Strip />
      <div className="flex min-w-0 flex-1 flex-col">
        <div className="flex h-[19px] shrink-0 items-center pl-[16px] text-[12px] text-[#222]">钢筋总重量（Kg）: 90.297</div>
        <div className="min-h-0 flex-1 border border-[#a8a8a8] bg-white">
          <table className="w-[333px] table-fixed border-collapse text-[12px] leading-none">
            <colgroup>
              <col className="w-[21px]" />
              <col className="w-[66px]" />
              <col className="w-[100px]" />
              <col className="w-[73px]" />
              <col className="w-[73px]" />
            </colgroup>
            <thead>
              <tr className="h-[19px]">
                <th rowSpan={2} className={TH} />
                <th rowSpan={2} className="border border-[#b8b8b8] bg-gradient-to-b from-[#fde4b0] to-[#f3c06a] p-0 font-normal text-[#7a0f7a]">构件名称</th>
                <th rowSpan={2} className={`${TH} whitespace-nowrap`}>钢筋总重里（<span className={MONO}>Kg</span>）</th>
                <th colSpan={2} className={`${TH} ${MONO} text-[11px]`}>HRB400</th>
              </tr>
              <tr className="h-[19px]">
                <th className={`${TH} ${MONO} text-[11px]`}>8</th>
                <th className={TH}>合计</th>
              </tr>
            </thead>
            <tbody>
              {ROWS.map(([name, v], i) => (
                <tr key={name}>
                  <td className={`${TD} text-center ${i === 0 ? "bg-[#ffd58a] text-[#6a0f6a]" : "bg-[#f2f2f2]"}`}>{i + 1}</td>
                  <td className={`${TD} whitespace-nowrap ${i === 0 ? "bg-[#d6e8f7]" : ""}`}>{name}</td>
                  <td className={TD}>{v}</td>
                  <td className={TD}>{v}</td>
                  <td className={TD}>{v}</td>
                </tr>
              ))}
              <tr className="bg-[#c9fbd3]">
                <td className={`${TD} bg-[#f2f2f2] text-center`}>5</td>
                <td className={`${TD} text-[12px] tracking-normal [font-family:'Noto_Sans_CJK_SC',sans-serif]`}>合计</td>
                <td className={TD}>90.297</td>
                <td className={TD}>90.297</td>
                <td className={TD}>90.297</td>
              </tr>
            </tbody>
          </table>
        </div>
      </div>
    </div>
  );
}

function StatusBar() {
  const cell = "flex h-full shrink-0 items-center border border-[#d6d6d6] px-[2px] whitespace-nowrap";
  return (
    <div className={`flex h-[20px] shrink-0 gap-[2px] bg-[#f0f0f0] text-[#111] ${MONO} text-[10px]`}>
      <div className={`${cell} w-[148px]`}>X=113796 Y=15192</div>
      <div className={`${cell} w-[78px]`}><span className="text-[12px]">层高</span>:4.5m</div>
      <div className={`${cell} w-[97px]`}><span className="text-[12px]">底标高</span>:-0.05m</div>
      <div className={`${cell} w-[48px]`}>4(9)</div>
      <div className={`${cell} flex-1 text-[12px]`}>请按鼠标左键选择图元，或拉框选择，按右键中止或<span className="text-[10px]">ESC</span>取消</div>
      <div className={`${cell} w-[70px]`}>357.2 FPS</div>
    </div>
  );
}

function TaskSlot({ children, line, on, className = "" }: { children: ReactNode; line?: boolean; on?: boolean; className?: string }) {
  return (
    <div className={twMerge("flex h-full w-[50px] shrink-0 items-center justify-center border-b-2", line ? "border-b-[#76b9ed]" : "border-b-transparent", on ? "bg-[#38454c]" : "", className)}>
      {children}
    </div>
  );
}

// browser "e" logos, drawn since they are logos and not letters
function ELogo({ color, ring }: { color: string; ring?: string }) {
  return (
    <svg width="28" height="28" viewBox="0 0 28 28" fill="none">
      <path d="M7 15h15a8 8 0 1 0-2.500 6" stroke={color} strokeWidth="4" />
      {ring && <path d="M5 23C1 27 0 22 6 14S23 0 25 3c1 2-1 6-4 9" stroke={ring} strokeWidth="1.500" />}
    </svg>
  );
}

function Taskbar() {
  return (
    <div className="flex h-[40px] shrink-0 bg-[#091418] text-white">
      <div className="flex w-[48px] shrink-0 items-center justify-center bg-black">
        <svg width="16" height="16" viewBox="0 0 16 16" fill="#fff"><path d="M0 2.500l6.500-1v6H0zM7.500 1.300L16 0v7.500H7.500zM0 8.500h6.500v6L0 13.500zM7.500 8.500H16V16l-8.500-1.300z" /></svg>
      </div>
      <div className="flex w-[344px] shrink-0 items-center bg-[#333] pl-[11px]">
        <span className="h-[18px] w-[18px] rounded-full border-[3px] border-[#e8e8e8]" />
        <span className="ml-[7px] text-[14px] text-[#8f8f8f]">在这里输入你要搜索的内容</span>
        <svg width="12" height="18" viewBox="0 0 12 18" fill="none" stroke="#8f8f8f" className="ml-[113px]"><rect x="3" y="1" width="6" height="11" rx="3" /><path d="M1 9c0 6 10 6 10 0M6 14v3M3 17h6" /></svg>
      </div>
      <div className="flex w-[49px] shrink-0 items-center justify-center">
        <svg width="20" height="16" viewBox="0 0 20 16" fill="none" stroke="#fff"><rect x="5.500" y=".5" width="9" height="15" /><path d="M3 3H.5v10H3M17 3h2.500v10H17" /></svg>
      </div>
      <TaskSlot>
        <svg width="22" height="24" viewBox="0 0 22 24" fill="#dfe3e6"><path d="M10 11C3 11 0 8 1 4s8-4 9 0zM12 11c0-7 2-10 6-9s5 8 1 9zM12 13c7 0 10 3 9 7s-8 4-9 0zM10 13c0 7-2 10-6 9s-5-8-1-9z" /></svg>
      </TaskSlot>
      <TaskSlot className="ml-[2px]"><ELogo color="#e4e8ea" ring="#c8ccd0" /></TaskSlot>
      <TaskSlot className="-ml-[1px] w-[48px]">
        <svg width="26" height="26" viewBox="0 0 26 26" fill="none"><path d="M4 14a8 8 0 1 1 8 8 5 5 0 1 1 4-8" stroke="#c8c8c8" strokeWidth="1.500" /><path d="M18 2c3 0 3 3 3 5l2 3h-10l2-3c0-2 0-5 3-5z" fill="#f2a81e" /></svg>
      </TaskSlot>
      <TaskSlot className="ml-[6px]"><ELogo color="#0f78d4" /></TaskSlot>
      <TaskSlot><ELogo color="#2f9be8" ring="#f2c21e" /></TaskSlot>
      <TaskSlot line className="ml-[3px] w-[40px]">
        <svg width="24" height="22" viewBox="0 0 24 22"><path d="M1 2h9l2 3h11v16H1z" fill="#f5cf6b" /><rect x="8" y="12" width="9" height="8" fill="#2f8fe0" /></svg>
      </TaskSlot>
      <TaskSlot line className="ml-[9px] w-[40px]">
        <svg width="24" height="26" viewBox="0 0 24 26" fill="none"><path d="M21 4C12 0 3 5 3 14c0 7 8 10 13 7 5-3 3-10-2-9" stroke="#1e88e8" strokeWidth="5" /></svg>
      </TaskSlot>
      <TaskSlot line className="ml-[9px] w-[40px]">
        <svg width="26" height="30" viewBox="0 0 26 30" fill="none"><circle cx="13" cy="16" r="12" fill="#8fd14a" stroke="#3f8a2a" /><circle cx="13" cy="16" r="8" fill="#f0fae0" /><path d="M7 16h12" stroke="#4aa02a" strokeWidth="2.500" /><path d="M14 3c4-2 6-1 8 0" stroke="#3f8a2a" strokeWidth="2" /></svg>
      </TaskSlot>
      <TaskSlot line on className="ml-[5px] w-[48px]">
        <svg width="24" height="24" viewBox="0 0 24 24" fill="none"><rect width="24" height="24" rx="4" fill="#1a9af0" /><path d="M12 4v12a4 4 0 0 1-7-2M12 10h8" stroke="#fff" strokeWidth="2.400" /></svg>
      </TaskSlot>
      <span className="ml-[23px] w-[46px] shrink-0 self-center text-[12px] text-[#c8c8c8]">链接</span>
      <div className="flex w-[48px] shrink-0 flex-col items-center justify-center text-[12px] leading-[19px] whitespace-nowrap text-[#ddd]">
        <span>48%</span>
        <span>CPU使用</span>
      </div>
      <div className="ml-[21px] flex items-center">
        <svg width="20" height="18" viewBox="0 0 20 18" fill="none" stroke="#7bd11e" strokeWidth="2.400"><path d="M1 6c5-5 13-5 18 0M4 10c3-3 9-3 12 0M7 13c1.500-1 4.500-1 6 0" /><circle cx="10" cy="16" r="1" fill="#7bd11e" /></svg>
        <svg width="14" height="8" viewBox="0 0 14 8" fill="none" stroke="#fff" strokeWidth="1.200" className="ml-[10px]"><path d="M1 7l6-6 6 6" /></svg>
        <svg width="16" height="16" viewBox="0 0 16 16" fill="none" stroke="#fff" className="ml-[9px]"><rect x="1.500" y="5.500" width="12" height="8" fill="#bbb" /><path d="M3 1v4M7 1v4M14 8h2" /></svg>
        <svg width="16" height="16" viewBox="0 0 16 16" fill="none" stroke="#ccc" className="ml-[10px]"><path d="M1 15A14 14 0 0 1 15 1M4 15A11 11 0 0 1 15 4M7 15a8 8 0 0 1 8-8M10 15a5 5 0 0 1 5-5" /></svg>
        <svg width="16" height="16" viewBox="0 0 16 16" fill="none" stroke="#ddd" className="ml-[6px]"><path d="M1 5.500h3l4-4v13l-4-4H1zM11 5c1.500 2 1.500 4 0 6" /></svg>
        <svg width="23" height="16" viewBox="0 0 23 16" fill="none" stroke="#ddd" className="ml-[9px]"><rect x=".5" y=".5" width="22" height="15" /><path d="M3 4h17M3 7h17M3 10h17M6 13h11" strokeDasharray="1.500 1" /></svg>
        <span className="ml-[9px] text-[13px] text-[#eee]">中</span>
        <svg width="16" height="18" viewBox="0 0 16 18" className="ml-[13px]"><path d="M2 1h13l-1 16H1z" fill="#e8501e" /><path d="M11 5H6v4h4v4H5" stroke="#fff" strokeWidth="1.800" fill="none" /></svg>
      </div>
      <div className="relative z-10 ml-[14px] flex w-[54px] shrink-0 flex-col justify-center text-[12px] leading-[19px] text-[#ddd]">
        <span className="w-[68px] text-center">10:05</span>
        <span className="w-[68px] text-center whitespace-nowrap">2018/6/13</span>
      </div>
      <div className="flex flex-1 items-center justify-center bg-black">
        <svg width="16" height="18" viewBox="0 0 16 18" fill="none" stroke="#fff"><path d="M.5.5h15v13h-4l-3.500 3.500-3.500-3.500h-4z" /></svg>
      </div>
    </div>
  );
}

export default function App() {
  return (
    <div className="relative flex h-[768px] w-[1366px] flex-col overflow-hidden bg-[#f0f0f0] text-[12px] [font-family:'Liberation_Sans','Noto_Sans_CJK_SC',sans-serif]">
      <TitleBar />
      <MenuBar />
      <Toolbar1 />
      <div className="flex min-h-0 flex-1">
        <LeftPanel />
        <div className="ml-[5px] flex min-w-0 flex-1 flex-col pt-[2px]">
          <Row2 />
          <Row3 />
          <Row4 />
          <Canvas />
          <SnapBar />
          <div className="flex min-h-0 flex-1">
            <RebarPanel />
            <SumPanel />
          </div>
        </div>
      </div>
      <StatusBar />
      <Taskbar />

      {/* floating gadgets that sit over the window */}
      <div className="absolute top-[-26px] left-[1009px] flex h-[44px] w-[44px] items-end justify-center rounded-full border-[3px] border-[#dfe6df] bg-[#2fa84f] pb-[2px] text-[13px] leading-none font-bold text-white shadow-[0_2px_3px_rgba(0,0,0,0.4)]">62</div>
      <div className="absolute top-[20px] left-[750px] flex h-[52px] w-[120px] items-center rounded-[26px] bg-white pl-[7px] shadow-[0_1px_6px_rgba(0,0,0,0.25)]">
        <span className="flex h-[38px] w-[38px] items-center justify-center rounded-full bg-[#2fbf6b]">
          <svg width="24" height="20" viewBox="0 0 24 20" fill="none" stroke="#fff" strokeWidth="2.400"><path d="M1 7c6-6 16-6 22 0M5 11c4-4 10-4 14 0M9 15c2-1.500 4-1.500 6 0" /><circle cx="12" cy="18" r="1" fill="#fff" /></svg>
        </span>
        <span className="mt-[14px] ml-[8px] h-[13px] w-[8px] rounded-[1px] bg-[#2fbf6b]" />
        <span className="mt-[14px] ml-[7px] text-[10px] text-[#666]">0</span>
      </div>
      <div className="absolute top-[17px] left-[782px] flex h-[22px] w-[194px] items-center gap-[8px] border border-[#c4d0dc] bg-[#f5f8fc] pl-[20px] text-[14px] font-bold text-[#1c7ccf]">
        <span>中</span>
        <span className="w-[12px] text-[11px]">°,</span>
        <svg width="16" height="16" viewBox="0 0 16 16" fill="none" stroke="#1c7ccf" strokeWidth="1.500"><circle cx="8" cy="8" r="7" /><path d="M5 5.500v1M11 5.500v1M4.500 9.500c2 3 5 3 7 0" /></svg>
        <svg width="12" height="16" viewBox="0 0 12 16" fill="#1c7ccf"><rect x="3" width="6" height="10" rx="3" /><path d="M1 8c0 5 10 5 10 0M6 12v3M3 15h6" stroke="#1c7ccf" fill="none" /></svg>
        <svg width="16" height="12" viewBox="0 0 16 12"><rect width="16" height="12" rx="1" fill="#1c7ccf" /><path d="M2 3h12M2 6h12M4 9h8" stroke="#fff" strokeDasharray="1.500 1" /></svg>
        <svg width="15" height="15" viewBox="0 0 15 15" fill="#b9c4cf"><circle cx="6" cy="4" r="3" /><path d="M1 14c0-6 10-6 10 0z" /></svg>
        <svg width="15" height="14" viewBox="0 0 15 14" fill="#1c7ccf"><path d="M4 0L0 3l2 3 1-.5V14h9V5.500l1 .5 2-3-4-3-3 1.500z" /></svg>
        <svg width="14" height="14" viewBox="0 0 14 14" fill="#1c7ccf"><path d="M9.500 0a4.500 4.500 0 0 0-4 6.500L0 12l2 2 5.500-5.500A4.500 4.500 0 0 0 14 4l-3 2-2.500-2.500L11 .3A4.500 4.500 0 0 0 9.500 0z" /></svg>
      </div>
      <svg width="27" height="26" viewBox="0 0 27 26" className="absolute top-[16px] left-[770px]">
        <path d="M2 4L26 0l-1 21-23 5z" fill="#f05a1a" />
        <path d="M19 7c-5-1-9 0-9 3s8 2 8 6-6 4-10 2" stroke="#fff" strokeWidth="3" fill="none" />
      </svg>

      {/* red hand-drawn markup ellipse */}
      <svg width="1366" height="768" viewBox="0 0 1366 768" className="pointer-events-none absolute top-0 left-0">
        <ellipse cx="1020" cy="586" rx="251" ry="120" fill="none" stroke="#ff0000" strokeWidth="3" shapeRendering="crispEdges" transform="rotate(-1 1020 586)" />
      </svg>
    </div>
  );
}
